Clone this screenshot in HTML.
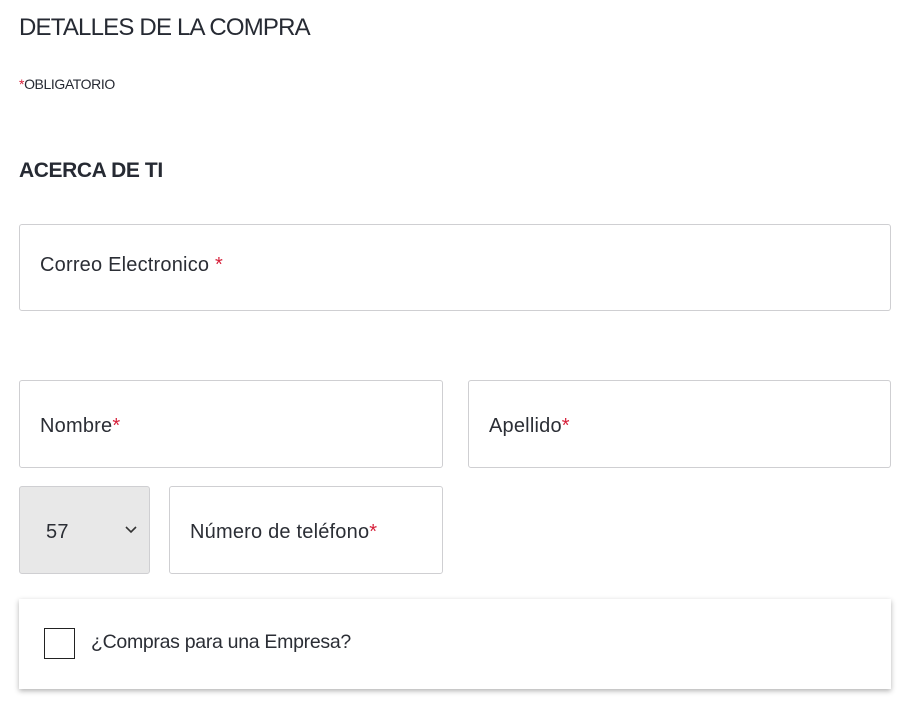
<!DOCTYPE html>
<html><head><meta charset="utf-8"><style>
*{box-sizing:border-box;margin:0;padding:0}
body{width:918px;height:718px;background:#fff;font-family:"Liberation Sans",sans-serif;color:#262a33;position:relative;overflow:hidden}
.a{position:absolute}
.box{position:absolute;border:1px solid #cfcfd2;border-radius:3px;background:#fff}
.lbl{position:absolute;left:20px;font-size:20px;color:#2b2e35;letter-spacing:0.2px}
.r{color:#d6203a}
</style></head><body>
<div class="a" style="left:19px;top:14px;font-size:24px;letter-spacing:-0.8px">DETALLES DE LA COMPRA</div>
<div class="a" style="left:19px;top:76px;font-size:14px;letter-spacing:-0.4px"><span class="r">*</span>OBLIGATORIO</div>
<div class="a" style="left:19px;top:159px;font-size:21px;font-weight:bold;letter-spacing:-0.4px">ACERCA DE TI</div>
<div class="box" style="left:19px;top:224px;width:872px;height:87px"><div class="lbl" style="top:29px">Correo Electronico <span class="r">*</span></div></div>
<div class="box" style="left:19px;top:380px;width:424px;height:88px"><div class="lbl" style="top:34px">Nombre<span class="r">*</span></div></div>
<div class="box" style="left:468px;top:380px;width:423px;height:88px"><div class="lbl" style="top:34px">Apellido<span class="r">*</span></div></div>
<div class="box" style="left:19px;top:486px;width:131px;height:88px;background:#e8e8e8"><div class="lbl" style="top:34px;left:26px">57</div>
<svg class="a" style="left:104px;top:38px" width="14" height="10" viewBox="0 0 14 10"><path d="M2 2l5 5 5-5" fill="none" stroke="#333" stroke-width="1.6"/></svg></div>
<div class="box" style="left:169px;top:486px;width:274px;height:88px"><div class="lbl" style="top:34px">Número de teléfono<span class="r">*</span></div></div>
<div class="a" style="left:19px;top:599px;width:872px;height:90px;background:#fff;box-shadow:0 2px 5px rgba(0,0,0,0.3)">
<div class="a" style="left:25px;top:29px;width:31px;height:31px;border:1.5px solid #222"></div>
<div class="lbl" style="left:72px;top:32px;font-size:19.5px;letter-spacing:-0.3px">¿Compras para una Empresa?</div></div>
</body></html>
